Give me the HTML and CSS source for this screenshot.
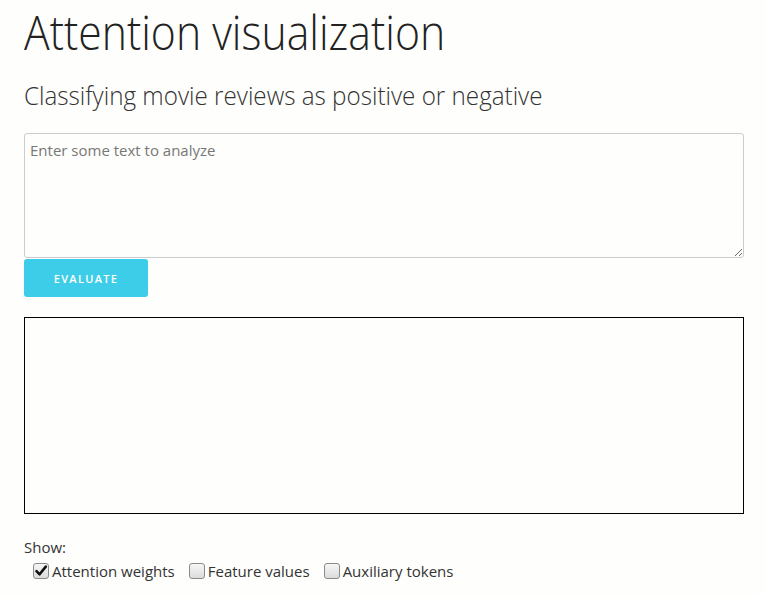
FILE: index.html
```html
<!DOCTYPE html>
<html>
<head>
<meta charset="utf-8">
<link rel="stylesheet" href="styles.css">
</head>
<body>
<div class="page">
  <h1 class="title">Attention visualization</h1>
  <h2 class="subtitle">Classifying movie reviews as positive or negative</h2>
  <textarea class="input" placeholder="Enter some text to analyze"></textarea>
  <button class="btn">EVALUATE</button>
  <div class="output"></div>
  <div class="show">Show:</div>
  <div class="opts">
    <label class="opt"><span class="box checked"><svg width="14" height="14" viewBox="0 0 14 14"><path d="M2.5 7.2 L5.6 10.3 L11.8 2.6" fill="none" stroke="#111" stroke-width="2.6" stroke-linecap="round" stroke-linejoin="round"/></svg></span>Attention weights</label>
    <label class="opt"><span class="box"></span>Feature values</label>
    <label class="opt"><span class="box"></span>Auxiliary tokens</label>
  </div>
</div>
</body>
</html>
```
FILE: styles.css
```css
html, body {
  margin: 0;
  padding: 0;
  background: #fefefc;
}
.page {
  width: 720px;
  padding: 0 0 0 24px;
  font-family: "Open Sans", sans-serif;
  color: #333;
}
.title {
  margin: 0;
  padding-top: 4px;
  font-weight: 300;
  font-size: 48px;
  line-height: 56px;
  color: #222;
  transform: scaleX(0.89);
  transform-origin: left center;
  white-space: nowrap;
}
.subtitle {
  margin: 18px 0 0 0;
  font-weight: 300;
  font-size: 25px;
  line-height: 34px;
  color: #333;
  transform: scaleX(0.968);
  transform-origin: left center;
  white-space: nowrap;
}
.input {
  display: block;
  box-sizing: border-box;
  width: 720px;
  height: 125px;
  margin-top: 21px;
  border: 1px solid #ccc;
  border-radius: 3px;
  background: #fefefc;
  padding: 6px 5px;
  font-family: "Open Sans", sans-serif;
  font-size: 15px;
  color: #333;
}
.input::placeholder {
  color: #777;
}
.btn {
  display: block;
  width: 124px;
  height: 38px;
  margin-top: 1px;
  border: 0;
  border-radius: 3px;
  background: #3ecde8;
  color: #fff;
  font-family: "Open Sans", sans-serif;
  font-size: 11px;
  font-weight: 600;
  letter-spacing: 1.3px;
}
.output {
  box-sizing: border-box;
  width: 720px;
  height: 197px;
  margin-top: 20px;
  border: 1px solid #000;
}
.show {
  margin-top: 24px;
  font-size: 15px;
  line-height: 18px;
}
.opts {
  display: flex;
  gap: 14px;
  padding-left: 9px;
  margin-top: 5px;
  font-size: 15px;
  line-height: 20px;
}
.opt {
  display: flex;
  align-items: center;
}
.box {
  box-sizing: border-box;
  width: 16px;
  height: 16px;
  margin-right: 3px;
  border: 1px solid #8a8a8a;
  border-radius: 3px;
  background: linear-gradient(#f6f6f6, #dcdcdc);
  display: flex;
  align-items: center;
  justify-content: center;
}
```
